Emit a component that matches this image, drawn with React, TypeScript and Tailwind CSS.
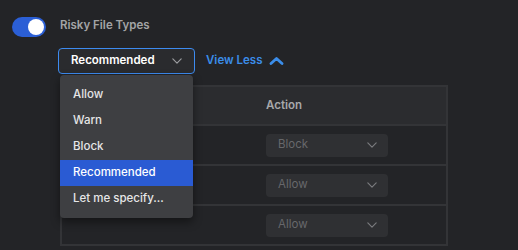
import React from 'react';

const options = ['Allow', 'Warn', 'Block', 'Recommended', 'Let me specify...'];
const rows = ['Block', 'Allow', 'Allow'];

function Chevron({ className }: { className?: string }) {
  return (
    <svg className={className} viewBox="0 0 12 7" fill="none" stroke="currentColor" strokeWidth={1.4}>
      <path strokeLinecap="round" strokeLinejoin="round" d="M1 1l5 5 5-5" />
    </svg>
  );
}

export default function App() {
  return (
    <div
      className="w-[518px] h-[250px] overflow-hidden bg-[#232427] flex gap-3 pl-3"
      style={{ fontFamily: 'Inter, "Noto Sans", sans-serif' }}
    >
      {/* Toggle */}
      <div className="mt-[17px] w-[34px] h-5 rounded-full bg-[#2b5fd6] flex items-center justify-end pr-[2px] shrink-0">
        <div className="w-4 h-4 rounded-full bg-white" />
      </div>

      <div className="pt-[17px] flex flex-col">
        <h2 className="pl-[2px] text-[11.5px] leading-4 font-semibold text-[#a3a4a6]">Risky File Types</h2>

        {/* Select + view less */}
        <div className="mt-[15px] flex items-center gap-[11px]">
          <div className="relative">
            <button className="w-[137px] h-[26px] rounded-[4px] border border-[#3d8bf0] bg-[#2a2b2e] flex items-center justify-between pl-3 pr-3 text-[11.5px] font-semibold text-white">
              <span>Recommended</span>
              <Chevron className="w-[10px] h-[6px] text-[#9c9da0]" />
            </button>

            {/* Open menu */}
            <ul className="absolute left-[2px] top-full mt-px z-10 w-[133px] rounded-[4px] bg-[#3e3f42] pt-[7px] pb-[6px] shadow-[0_4px_10px_rgba(0,0,0,0.45)]">
              {options.map((opt) => (
                <li
                  key={opt}
                  className={`h-[26px] flex items-center pl-[13px] text-[11.5px] font-medium ${
                    opt === 'Recommended' ? 'bg-[#2a5bd3] text-white' : 'text-[#e6e6e7]'
                  }`}
                >
                  {opt}
                </li>
              ))}
            </ul>
          </div>

          <button className="flex items-center gap-[6px] text-[11.5px] font-semibold text-[#3b8de9]">
            View Less
            <svg className="w-[15px] h-[8px]" viewBox="0 0 15 8" fill="none" stroke="currentColor" strokeWidth={2.8}>
              <path strokeLinecap="round" strokeLinejoin="round" d="M2 6.5l5.5-5 5.5 5" />
            </svg>
          </button>
        </div>

        {/* Table */}
        <div className="mt-[11px] ml-[2px] w-[388px] border-x-2 border-t-2 border-[#333437]">
          <div className="grid grid-cols-2 h-[39px] items-center bg-[#2b2c2f] border-b-2 border-[#333437]">
            <div />
            <div className="px-3 text-[11.5px] font-semibold text-[#a7a8aa]">Action</div>
          </div>
          {rows.map((val, i) => (
            <div key={i} className="grid grid-cols-2 h-[40px] items-center border-b-2 border-[#333437]">
              <div />
              <div className="px-3">
                <div className="w-[122px] h-[23px] rounded-[4px] bg-[#2f3033] flex items-center justify-between pl-3 pr-[11px] text-[11.5px] text-[#67686b]">
                  <span>{val}</span>
                  <Chevron className="w-[10px] h-[6px] text-[#7a7b7e]" />
                </div>
              </div>
            </div>
          ))}
        </div>
      </div>
    </div>
  );
}
